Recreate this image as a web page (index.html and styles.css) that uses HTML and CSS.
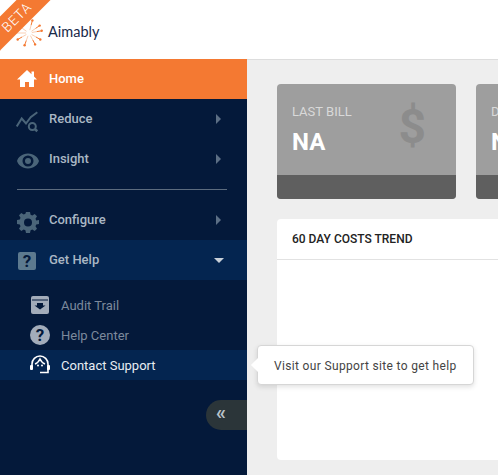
FILE: index.html
```html
<!DOCTYPE html>
<html lang="en">
<head>
  <meta charset="UTF-8" />
  <meta name="viewport" content="width=device-width, initial-scale=1.0" />
  <title>Aimably</title>
  <link rel="stylesheet" href="styles.css">
</head>
<body>
  <header class="topbar">
    <svg class="logo-mark" viewBox="0 0 30 30" width="30" height="30">
      <path stroke="#f9cfb4" stroke-width="1" fill="none" d="M15.800 12.100L17.100 7.200M17.500 13.300L21.600 10.400M17.900 14.500L22.800 13.600M17.600 16.500L22 19M16.400 17.600L18.800 22M14 17.800L12.300 22.500M12.400 16.500L8 19M12 15L7 15M12.500 13.300L8.400 10.400"/>
      <path stroke="#f47932" stroke-width="1" fill="none" d="M17.100 7.200L18.400 2.400M21.600 10.400L25.700 7.600M22.800 13.600L27.700 12.800M22 19L26.300 21.500M18.800 22L21.100 26.400M12.300 22.500L10.600 27.200M8 19L3.700 21.500"/>
      <path stroke="#f9cfb4" stroke-width="1" fill="none" d="M7 15L2 15M8.400 10.400L4.300 7.600"/>
      <g fill="#f47932">
        <circle cx="18.400" cy="2.400" r="1.200"/><circle cx="25.700" cy="7.600" r="1.200"/><circle cx="27.700" cy="12.800" r="1.200"/>
        <circle cx="26.300" cy="21.500" r="1.200"/><circle cx="21.100" cy="26.400" r="1.200"/><circle cx="10.600" cy="27.200" r="1.200"/>
        <circle cx="3.700" cy="21.500" r="1.200"/>
      </g>
    </svg>
    <span class="logo-text">Aimably</span>
    <div class="beta-ribbon">BETA</div>
  </header>

  <div class="layout">
    <nav class="sidebar">
      <a class="nav-item active">
        <svg class="nav-icon home-icon" viewBox="0 0 24 24" width="24" height="24"><path fill="#fff" d="M11 3L1 12.500h3V20h5v-5h4v5h5v-7.500h3l-3-2.900V4.500h-2.500v2.700z"/></svg>
        <span class="nav-label">Home</span>
      </a>
      <a class="nav-item">
        <svg class="nav-icon" viewBox="0 0 24 24" width="24" height="24"><path fill="none" stroke="#4b6579" stroke-width="2" d="M.7 17.500L5.700 9.500 10 14.500 14.700 8.200 21.300 3.200"/><circle cx="16.300" cy="17.500" r="3.500" fill="#04193a" stroke="#4b6579" stroke-width="2"/><path stroke="#4b6579" stroke-width="2.500" d="M18.800 20l2.500 2.200"/></svg>
        <span class="nav-label">Reduce</span>
        <span class="caret-right"></span>
      </a>
      <a class="nav-item">
        <svg class="nav-icon" viewBox="0 0 24 24" width="24" height="24"><path fill="#4b6579" fill-rule="evenodd" d="M12 4.500C6 4.500 2 8.500 1 12c1 3.500 5 7.500 11 7.500S22 15.500 23 12c-1-3.500-5-7.500-11-7.500zm0 13a5.500 5.500 0 1 1 0-11 5.500 5.500 0 0 1 0 11zm0-2.500a3 3 0 1 0 0-6 3 3 0 0 0 0 6z"/></svg>
        <span class="nav-label">Insight</span>
        <span class="caret-right"></span>
      </a>
      <div class="nav-divider"></div>
      <a class="nav-item">
        <svg class="nav-icon" viewBox="0 0 24 24" width="24" height="24"><path fill="#4b6579" fill-rule="evenodd" d="M10 2h4l.6 2.800 1.700.7 2.400-1.500 2.300 2.300-1.500 2.400.7 1.700L23 10v4l-2.800.6-.7 1.700 1.500 2.400-2.300 2.300-2.400-1.500-1.700.7L14 23h-4l-.6-2.800-1.700-.7-2.400 1.500L3 18.700l1.500-2.400-.7-1.700L1 14v-4l2.800-.6.7-1.700L3 5.300 5.300 3l2.400 1.500 1.700-.7zM12 8.500a4 4 0 1 0 0 8 4 4 0 0 0 0-8z"/></svg>
        <span class="nav-label">Configure</span>
        <span class="caret-right"></span>
      </a>
      <a class="nav-item open">
        <svg class="nav-icon" viewBox="0 0 24 24" width="24" height="24"><rect x="2" y="2" width="18" height="18" rx="2" fill="#5d7a8f"/><text x="11" y="17" class="icon-q">?</text></svg>
        <span class="nav-label">Get Help</span>
        <span class="caret-down"></span>
      </a>
      <div class="subnav">
        <a class="sub-item">
          <svg class="sub-icon" viewBox="0 0 20 20" width="20" height="20"><path fill="#a3acba" d="M3 1h14a2 2 0 0 1 2 2v14a2 2 0 0 1-2 2H3a2 2 0 0 1-2-2V3a2 2 0 0 1 2-2z"/><path fill="#04193a" d="M2 4.500h16v1H2zM7 8h6v2.500h2.500L10 14.500l-5.500-4H7z"/></svg>
          <span>Audit Trail</span>
        </a>
        <a class="sub-item">
          <svg class="sub-icon" viewBox="0 0 20 20" width="20" height="20"><circle cx="10" cy="10" r="10" fill="#a3acba"/><text x="10" y="16" class="icon-q">?</text></svg>
          <span>Help Center</span>
        </a>
        <a class="sub-item active-sub">
          <svg class="sub-icon" viewBox="0 0 20 20" width="20" height="20"><path fill="none" stroke="#fff" stroke-width="1.600" d="M2 11V9a8 8 0 0 1 16 0v2M5 9c1.500-.5 3.500-2 5-5 1.500 3 3.500 4.500 5 5"/><rect x="0" y="10" width="3" height="5" rx="1" fill="#fff"/><rect x="17" y="10" width="3" height="5" rx="1" fill="#fff"/><path fill="none" stroke="#fff" stroke-width="1.600" d="M18 14v3.500H10"/><circle cx="8" cy="10.500" r="1" fill="#fff"/><circle cx="12" cy="10.500" r="1" fill="#fff"/></svg>
          <span>Contact Support</span>
        </a>
      </div>
      <div class="collapse-row">
        <div class="collapse-btn">«</div>
      </div>
    </nav>

    <main class="content">
      <div class="stat-row">
        <div class="stat-card">
          <div class="stat-body">
            <div>
              <div class="stat-title">LAST BILL</div>
              <div class="stat-value">NA</div>
            </div>
            <span class="stat-icon">$</span>
          </div>
          <div class="stat-foot"></div>
        </div>
        <div class="stat-card">
          <div class="stat-body">
            <div>
              <div class="stat-title">DAILY</div>
              <div class="stat-value">NA</div>
            </div>
          </div>
          <div class="stat-foot"></div>
        </div>
      </div>
      <section class="trend-card">
        <h3 class="trend-title">60 DAY COSTS TREND</h3>
      </section>
    </main>
  </div>

  <div class="tooltip">Visit our Support site to get help</div>
</body>
</html>
```

FILE: styles.css
```css
* {
  box-sizing: border-box;
  margin: 0;
  padding: 0;
}
body {
  width: 498px;
  height: 475px;
  overflow: hidden;
  background: #eeeeee;
  font-family: Roboto, 'Liberation Sans', sans-serif;
  position: relative;
}
.topbar {
  height: 60px;
  background: #ffffff;
  border-bottom: 1px solid #dddddd;
  display: flex;
  align-items: center;
  padding-left: 14px;
  gap: 4px;
  position: relative;
  overflow: hidden;
}
.beta-ribbon {
  position: absolute;
  left: -46px;
  top: 5px;
  width: 125px;
  height: 24px;
  background: #f47932;
  transform: rotate(-45deg);
  color: #fff;
  font-size: 13.500px;
  font-weight: 300;
  letter-spacing: 0.8px;
  text-align: center;
  line-height: 24px;
}
.logo-mark {
  flex: none;
  margin-top: 6px;
}
.logo-text {
  font-family: Lato, sans-serif;
  font-size: 14.500px;
  color: #1a2a4a;
  margin-top: 3px;
}
.layout {
  display: flex;
  height: 415px;
}
.sidebar {
  width: 247px;
  flex: none;
  background: #04193a;
  margin-top: -1px;
}
.nav-item {
  height: 40px;
  display: flex;
  align-items: center;
  color: #aab7c4;
  font-size: 13px;
  font-weight: 500;
  position: relative;
  padding-left: 16px;
}
.nav-item.active {
  background: #f47932;
  color: #fff;
}
.nav-item.open {
  background: #042550;
}
.nav-icon {
  flex: none;
  margin: 3px 9px 0 0;
}
.home-icon {
  margin-top: 0;
}
.nav-label {
  flex: 1;
  padding-bottom: 2px;
}
.caret-right {
  width: 0;
  height: 0;
  border-top: 5px solid transparent;
  border-bottom: 5px solid transparent;
  border-left: 5px solid #5c6f85;
  margin-right: 26px;
}
.caret-down {
  width: 0;
  height: 0;
  border-left: 5px solid transparent;
  border-right: 5px solid transparent;
  border-top: 5px solid #c8d0d8;
  margin-right: 23px;
}
.nav-divider {
  height: 1px;
  background: #5c6b7e;
  margin: 10px 20px 10px 17px;
}
.subnav {
  padding-top: 10px;
}
.sub-item {
  height: 30px;
  display: flex;
  align-items: center;
  gap: 11px;
  padding-left: 30px;
  color: #7c899c;
  font-size: 13px;
}
.sub-item.active-sub {
  background: #042550;
  color: #e8edf2;
}
.sub-icon {
  flex: none;
}
.icon-q {
  font-family: Roboto, sans-serif;
  font-size: 17px;
  font-weight: 700;
  fill: #04193a;
  text-anchor: middle;
}
.collapse-row {
  display: flex;
  justify-content: flex-end;
  margin-top: 20px;
}
.collapse-btn {
  width: 41px;
  height: 30px;
  background: #2b3539;
  border-radius: 15px 0 0 15px;
  color: #b9c2c9;
  font-size: 20px;
  font-weight: 700;
  line-height: 24px;
  padding-left: 10px;
}
.content {
  flex: 1;
  min-width: 0;
  padding: 24px 0 0 30px;
  overflow: hidden;
}
.stat-row {
  display: flex;
  gap: 20px;
}
.stat-card {
  width: 179px;
  height: 115px;
  flex: none;
  border-radius: 4px;
  overflow: hidden;
  background: #9e9e9e;
  display: flex;
  flex-direction: column;
}
.stat-body {
  flex: 1;
  display: flex;
  justify-content: space-between;
  padding: 20px 0 0 15px;
}
.stat-title {
  font-size: 13px;
  color: #d9d9d9;
  line-height: 15px;
}
.stat-value {
  font-size: 24px;
  font-weight: 700;
  color: #ffffff;
  line-height: 28px;
  margin-top: 9px;
}
.stat-icon {
  font-size: 48px;
  font-weight: 700;
  color: #8c8c8c;
  line-height: 48px;
  margin: -1px 30px 0 0;
}
.stat-foot {
  height: 24px;
  background: #5f5f5f;
}
.trend-card {
  width: 260px;
  height: 241px;
  margin-top: 20px;
  background: #ffffff;
  border-radius: 4px 0 0 4px;
}
.trend-title {
  height: 41px;
  border-bottom: 1px solid #e2e2e2;
  font-size: 12px;
  font-weight: 500;
  color: #222222;
  line-height: 40px;
  padding-left: 15px;
}
.tooltip {
  position: absolute;
  left: 257px;
  top: 345px;
  width: 217px;
  height: 40px;
  background: #ffffff;
  border: 1px solid #d6d6d6;
  border-radius: 4px;
  box-shadow: 0 2px 5px rgba(0, 0, 0, 0.12);
  font-size: 12px;
  letter-spacing: 0.34px;
  line-height: 40px;
  color: #444444;
  padding-left: 16px;
}
.tooltip::before {
  content: "";
  position: absolute;
  left: -5px;
  top: 14px;
  width: 10px;
  height: 10px;
  background: #ffffff;
  transform: rotate(45deg);
}
```
